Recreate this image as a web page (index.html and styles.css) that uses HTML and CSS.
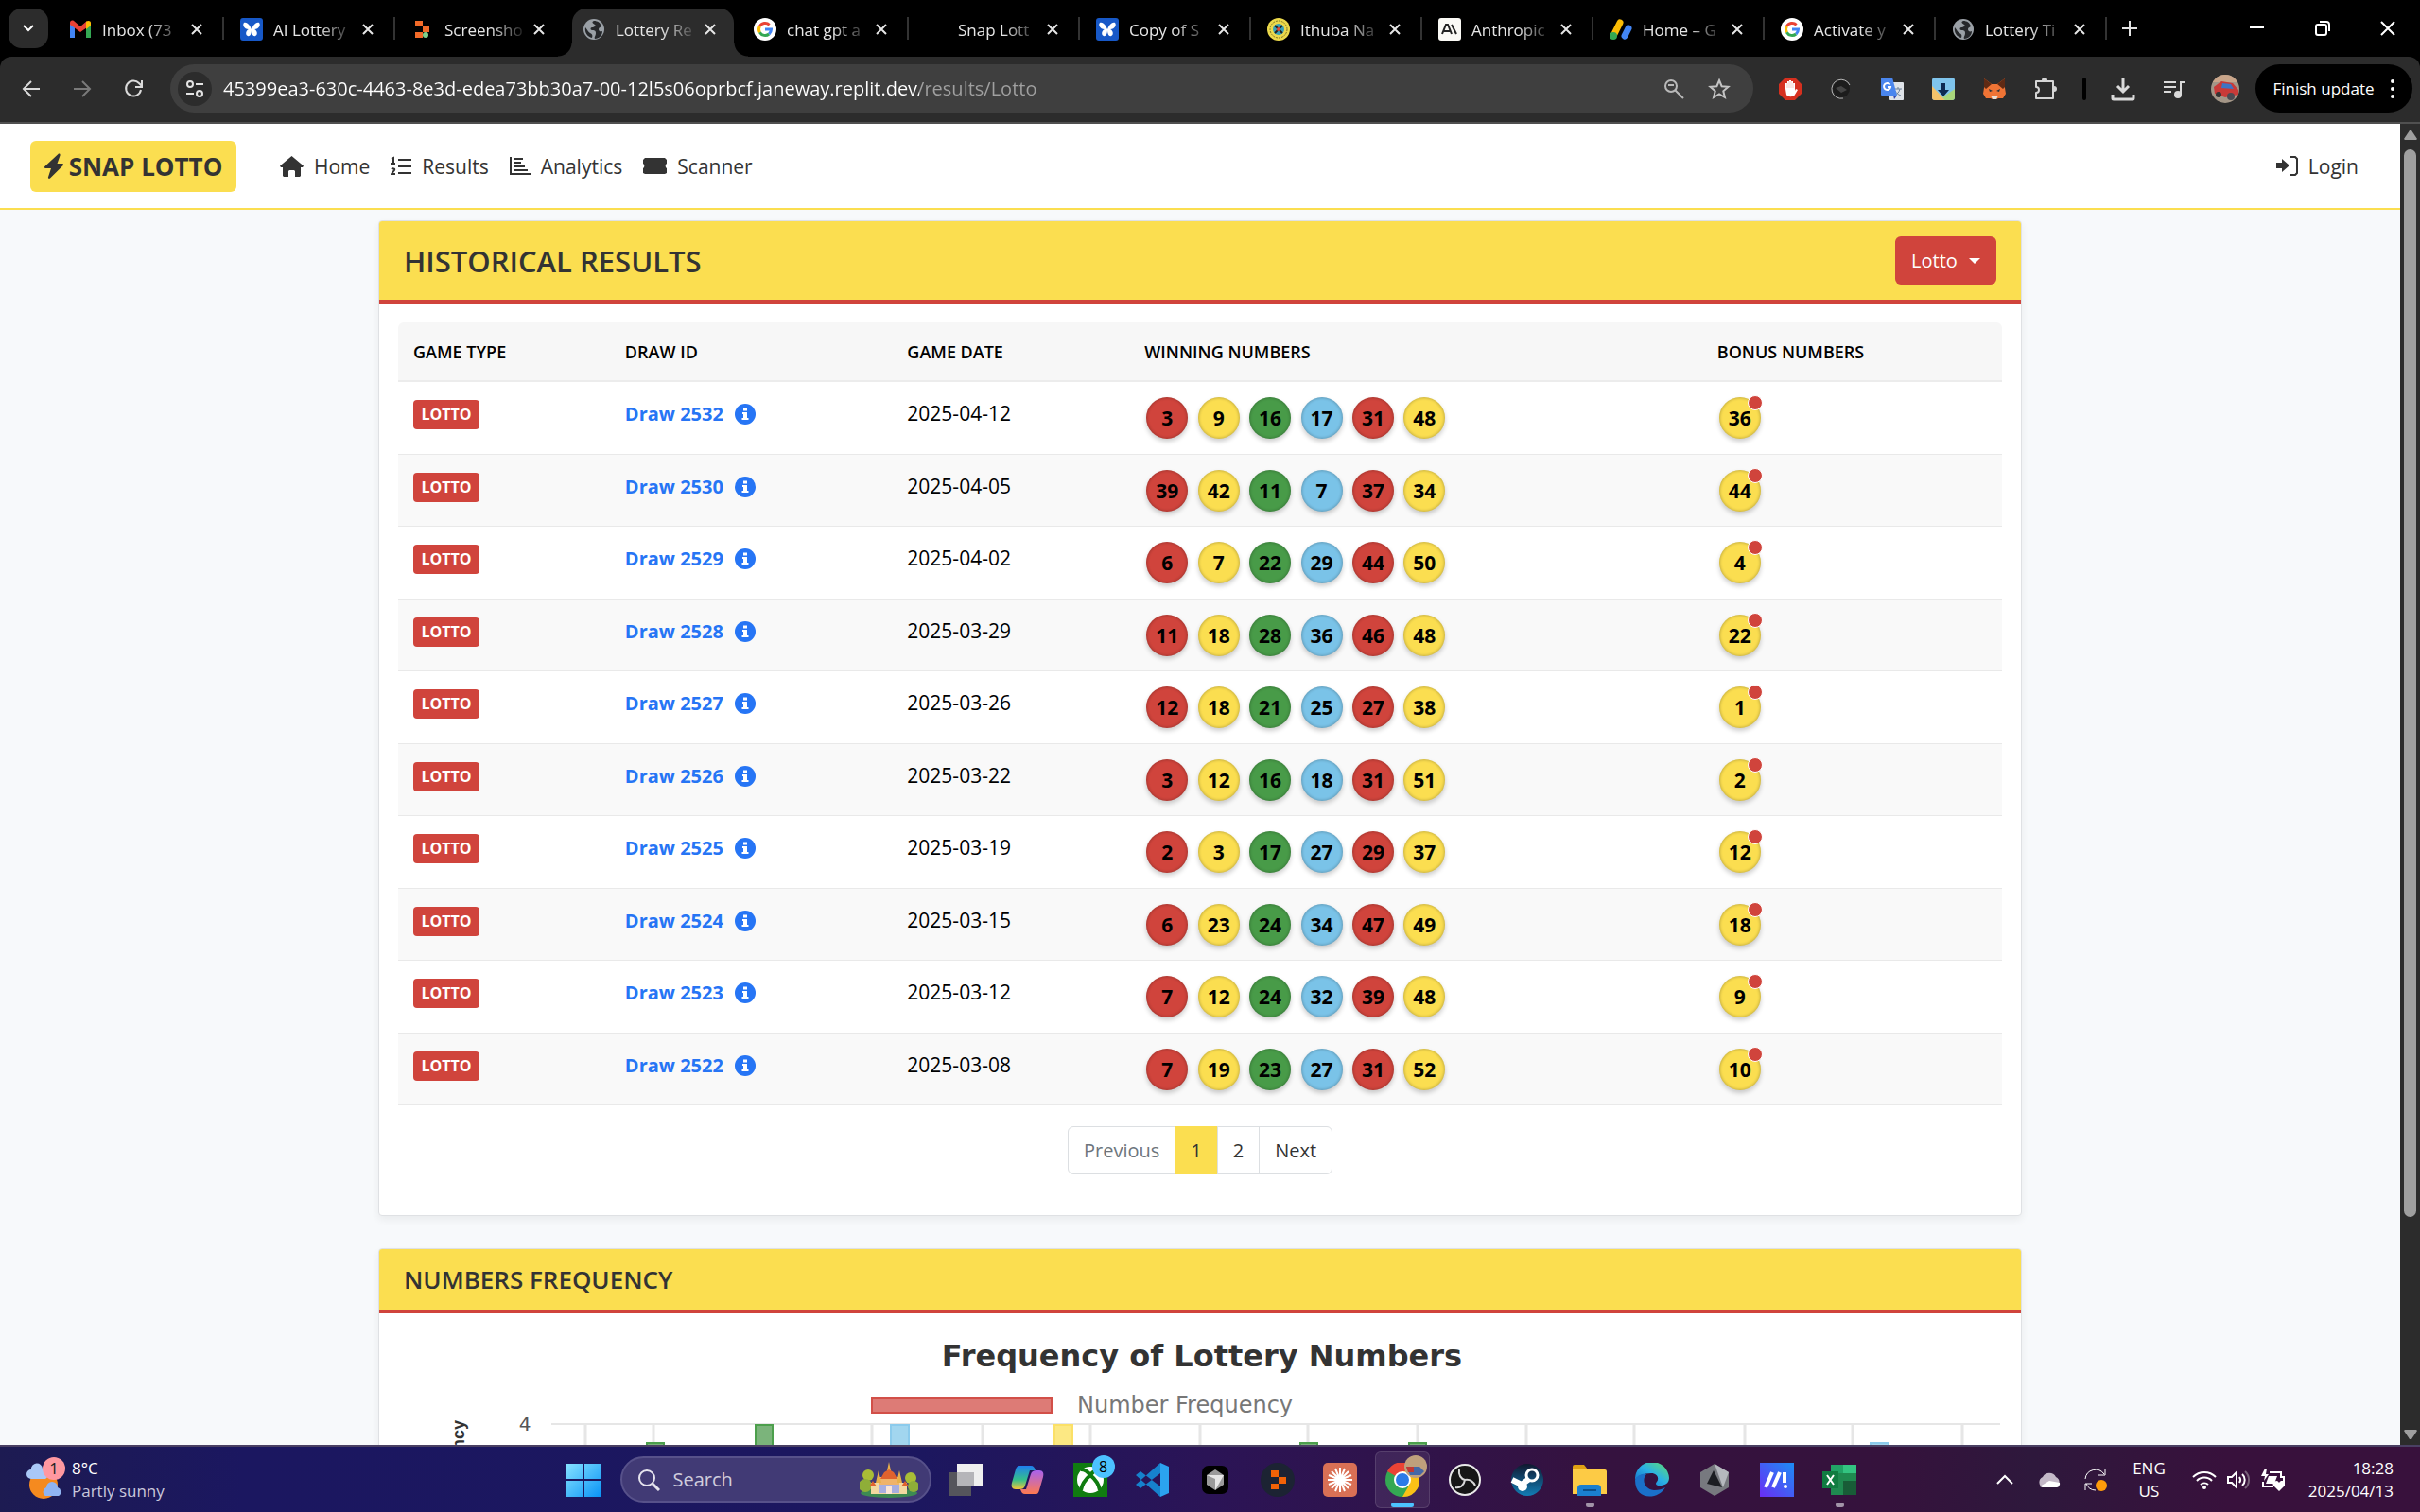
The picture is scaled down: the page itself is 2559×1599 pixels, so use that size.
FILE: index.html
```html
<!DOCTYPE html>
<html lang="en">
<head>
<meta charset="utf-8">
<title>Lottery Results</title>
<link rel="stylesheet" href="styles.css">
</head>
<body>
<svg class="defs" aria-hidden="true">
  <symbol id="close" viewBox="0 0 14 14"><path d="M2 2l10 10M12 2L2 12" stroke="currentColor" stroke-width="2" fill="none"/></symbol>
  <symbol id="globe" viewBox="0 0 24 24"><circle cx="12" cy="12" r="11" fill="#9aa0a6"/><path d="M12 3c-3 1-1 3 1 4s-1 3-3 3-2 3 0 3 4 0 4 3-2 4-1 6c5 0 8-4 8-8-2 1-4 0-4-2s2-2 3-3c-1-4-4-6-8-6zM3 10c-1 5 2 10 7 11 1-3 0-4-2-5s-3-4-5-6z" fill="#26282b"/></symbol>
  <symbol id="google" viewBox="0 0 24 24"><circle cx="12" cy="12" r="12" fill="#fff"/><g fill="none" stroke-width="3"><path d="M16.6 7.4A6.5 6.5 0 0 0 6.4 8.8" stroke="#ea4335"/><path d="M6.4 8.8a6.5 6.5 0 0 0 0 6.4" stroke="#fbbc05"/><path d="M6.4 15.2a6.5 6.5 0 0 0 9.8 1.8" stroke="#34a853"/><path d="M16.2 17c1.500-1.300 2.300-3 2.300-5H12" stroke="#4285f4"/></g></symbol>
  <symbol id="butterfly" viewBox="0 0 24 24"><rect width="24" height="24" rx="3" fill="#1758c7"/><path d="M12 12C10 7 7 4 4 5c-2 2 0 7 5 7-3 1-4 6-1 7 2 1 4-2 4-6 0 4 2 7 4 6 3-1 2-6-1-7 5 0 7-5 5-7-3-1-6 2-8 7z" fill="#fff"/></symbol>
  <symbol id="info" viewBox="0 0 22 22"><circle cx="11" cy="11" r="11" fill="#2675f5"/><path d="M9 4.500h4v3H9zM8 9h5v6h1.500v2H7.500v-2H9v-4H8z" fill="#fff"/></symbol>
  <symbol id="winlogo" viewBox="0 0 36 36"><defs><linearGradient id="wl" x1="0" y1="0" x2="1" y2="1"><stop offset="0" stop-color="#86e2ff"/><stop offset="1" stop-color="#0a94f7"/></linearGradient></defs><path d="M0 1h17v16H0zM19 1h17v16H19zM0 19h17v17H0zM19 19h17v17H19z" fill="url(#wl)"/></symbol>
</svg>

<header class="tabstrip">
  <button class="tab-search" aria-label="Search tabs"><svg width="16" height="16" viewBox="0 0 16 16"><path d="M3 5l5 5 5-5" stroke="#fff" stroke-width="2" fill="none"/></svg></button>
  <nav class="tabs" aria-label="Tabs">
    <div class="tab"><svg class="fav" viewBox="0 0 24 24"><path d="M1 21V5l5 4v12z" fill="#4285f4"/><path d="M18 9l5-4v16h-5z" fill="#34a853"/><path d="M1 5c0-2 2-3 4-2l7 6 7-6v7l-7 5-11-8z" fill="#ea4335"/><path d="M18 4c2-2 5-1 5 1v3l-5 4z" fill="#fbbc04"/></svg><span>Inbox (73</span><button aria-label="Close"><svg><use href="#close"/></svg></button></div>
    <div class="tab"><svg class="fav"><use href="#butterfly"/></svg><span>AI Lottery</span><button aria-label="Close"><svg><use href="#close"/></svg></button></div>
    <div class="tab no-line"><svg class="fav" viewBox="0 0 24 24"><path d="M4 3h8v6H4zM12 9h7v6h-7zM4 15h8v6H4z" fill="#f26a28"/><circle cx="15" cy="18" r="3" fill="#7fd08a"/></svg><span>Screensho</span><button aria-label="Close"><svg><use href="#close"/></svg></button></div>
    <div class="tab active"><svg class="fav"><use href="#globe"/></svg><span>Lottery Re</span><button aria-label="Close"><svg><use href="#close"/></svg></button></div>
    <div class="tab"><svg class="fav"><use href="#google"/></svg><span>chat gpt a</span><button aria-label="Close"><svg><use href="#close"/></svg></button></div>
    <div class="tab"><svg class="fav"></svg><span>Snap Lott</span><button aria-label="Close"><svg><use href="#close"/></svg></button></div>
    <div class="tab"><svg class="fav"><use href="#butterfly"/></svg><span>Copy of S</span><button aria-label="Close"><svg><use href="#close"/></svg></button></div>
    <div class="tab"><svg class="fav" viewBox="0 0 24 24"><circle cx="12" cy="12" r="12" fill="#ecd94b"/><circle cx="12" cy="12" r="9" fill="none" stroke="#7d7424" stroke-width="1" stroke-dasharray="2 1"/><circle cx="12" cy="12" r="6" fill="#38a0b8"/><path d="M8 8l8 8M16 8l-8 8" stroke="#222" stroke-width="2"/><circle cx="12" cy="12" r="2" fill="#e04a3a"/></svg><span>Ithuba Na</span><button aria-label="Close"><svg><use href="#close"/></svg></button></div>
    <div class="tab"><svg class="fav" viewBox="0 0 24 24"><rect width="24" height="24" rx="3" fill="#faf9f5"/><path d="M4 17L8 7h2l4 10M6 14h6M14 7l5 10" stroke="#222" stroke-width="2" fill="none"/></svg><span>Anthropic</span><button aria-label="Close"><svg><use href="#close"/></svg></button></div>
    <div class="tab"><svg class="fav" viewBox="0 0 24 24"><path d="M5 17L11 5" stroke="#fbbc04" stroke-width="7" stroke-linecap="round"/><path d="M16 19l4-8" stroke="#4285f4" stroke-width="7" stroke-linecap="round"/><circle cx="4" cy="19" r="4" fill="#34a853"/></svg><span>Home – G</span><button aria-label="Close"><svg><use href="#close"/></svg></button></div>
    <div class="tab"><svg class="fav"><use href="#google"/></svg><span>Activate y</span><button aria-label="Close"><svg><use href="#close"/></svg></button></div>
    <div class="tab"><svg class="fav"><use href="#globe"/></svg><span>Lottery Ti</span><button aria-label="Close"><svg><use href="#close"/></svg></button></div>
  </nav>
  <button class="new-tab" aria-label="New tab"><svg width="18" height="18" viewBox="0 0 18 18"><path d="M9 1v16M1 9h16" stroke="#e3e3e3" stroke-width="2"/></svg></button>
  <div class="win-controls">
    <button aria-label="Minimize"><svg viewBox="0 0 18 18"><path d="M1 8h15" stroke="#fff" stroke-width="2"/></svg></button>
    <button aria-label="Restore"><svg viewBox="0 0 18 18"><rect x="2" y="5" width="11" height="11" rx="2" fill="none" stroke="#fff" stroke-width="2"/><path d="M6 2h7a3 3 0 0 1 3 3v7" fill="none" stroke="#fff" stroke-width="2"/></svg></button>
    <button aria-label="Close window"><svg viewBox="0 0 18 18"><path d="M2 2l14 14M16 2L2 16" stroke="#fff" stroke-width="2"/></svg></button>
  </div>
</header>

<div class="toolbar">
  <button class="tool" aria-label="Back"><svg width="24" height="24" viewBox="0 0 24 24"><path d="M21 12H4M12 4l-8 8 8 8" stroke="#dadada" stroke-width="2" fill="none"/></svg></button>
  <button class="tool" aria-label="Forward"><svg width="24" height="24" viewBox="0 0 24 24"><path d="M3 12h17M12 4l8 8-8 8" stroke="#7a7a7a" stroke-width="2" fill="none"/></svg></button>
  <button class="tool" aria-label="Reload"><svg width="24" height="24" viewBox="0 0 24 24"><path d="M20 13a8 8 0 1 1-2-7l3 3M21 3v7h-7" stroke="#dadada" stroke-width="2" fill="none"/></svg></button>
  <div class="omnibox">
    <button class="site-info" aria-label="Site information"><svg width="20" height="20" viewBox="0 0 20 20"><g stroke="#e3e3e3" stroke-width="2" fill="none"><circle cx="5" cy="5" r="3"/><path d="M11 5h8"/><circle cx="15" cy="15" r="3"/><path d="M1 15h8"/></g></svg></button>
    <input class="url" type="text" aria-label="Address" value="45399ea3-630c-4463-8e3d-edea73bb30a7-00-12l5s06oprbcf.janeway.replit.dev/results/Lotto">
    <button aria-label="Zoom"><svg width="22" height="22" viewBox="0 0 22 22"><g stroke="#b9b9b9" stroke-width="2" fill="none"><circle cx="8" cy="8" r="6"/><path d="M5 7h6M12 12l9 9"/></g></svg></button>
    <button aria-label="Bookmark"><svg width="24" height="24" viewBox="0 0 24 24"><path d="M12 3l2.600 6.200 6.900.6-5.200 4.500 1.600 6.700L12 17.400 6.100 21l1.600-6.700-5.200-4.500 6.900-.6z" stroke="#c4c4c4" stroke-width="2" fill="none"/></svg></button>
  </div>
  <div class="extensions">
    <button class="tool" aria-label="Ad blocker"><svg width="24" height="24" viewBox="0 0 24 24"><path d="M7 0h10l7 7v10l-7 7H7l-7-7V7z" fill="#d6301f"/><path d="M7 12V6h2V4h2V3h2v1h2v2h2v8l1-2 2 1-3 5c-1 3-8 3-9 0z" fill="#fff"/><path d="M9 6v5M11 4v7M13 4v7M15 6v5" stroke="#e9988f" stroke-width=".5"/></svg></button>
    <button class="tool" aria-label="Dark extension"><svg width="24" height="24" viewBox="0 0 24 24"><circle cx="12" cy="12" r="9" fill="#1c1c1c"/><path d="M14 22A10 10 0 1 1 21 8" stroke="#b5b5b5" stroke-width="1" fill="none"/><path d="M6 11l6-2 6 4-6 3z" fill="#444"/></svg></button>
    <button class="tool" aria-label="Translate"><svg width="26" height="26" viewBox="0 0 26 26"><rect x="10" y="6" width="15" height="19" rx="1" fill="#dfe3e8"/><path d="M15 13h8M19 11v2M21 13c-1 4-3 5-5 7M16 15c1 2 3 4 6 5" stroke="#6a7f99" stroke-width="1" fill="none"/><path d="M14 20h4l-3 4z" fill="#3447a8"/><path d="M1 1h12l5 19H2a1 1 0 0 1-1-1z" fill="#4a86ee"/><path d="M10.500 8.500a3.500 3.500 0 1 0 .5 2.500H8" stroke="#fff" stroke-width="2" fill="none"/></svg></button>
    <button class="tool" aria-label="Downloader"><svg width="26" height="26" viewBox="0 0 26 26"><rect x="1" y="1" width="24" height="24" rx="3" fill="#7fc4ec"/><path d="M1 10l14 15H4a3 3 0 0 1-3-3z" fill="#f4c26a"/><path d="M25 13L12 22l3 3h7a3 3 0 0 0 3-3z" fill="#a9d77c"/><path d="M11 7h4v7h4l-6 7-6-7h4z" fill="#0d2a52"/></svg></button>
    <button class="tool" aria-label="Wallet"><svg width="26" height="26" viewBox="0 0 26 26"><path d="M2 2l8 6h6l8-6v10l1 6-3 5h-5l-2 1h-4l-2-1H4l-3-5 1-6z" fill="#ef7435"/><path d="M2 2l8 6-6 5-2-2zM24 2l-8 6 6 5 2-2z" fill="#5f2a14"/><path d="M7 13l4 2-3 1zM19 13l-4 2 3 1z" fill="#26323c"/><path d="M9 20h8l-2 4h-4z" fill="#e8dfd5"/></svg></button>
    <button class="tool" aria-label="Extensions"><svg width="26" height="26" viewBox="0 0 26 26"><path d="M3 5h18v18H3v-6a3 3 0 0 0 0-6z" stroke="#d6d6d6" stroke-width="2" fill="none" stroke-linejoin="round"/><path d="M9 4a3 3 0 0 1 6 0zM22 10a3 3 0 0 1 0 6z" fill="#d6d6d6"/></svg></button>
    <span class="divider"></span>
    <button class="tool" aria-label="Downloads"><svg width="26" height="26" viewBox="0 0 26 26"><path d="M13 1v15M7 10l6 6 6-6M2 19v4a1 1 0 0 0 1 1h20a1 1 0 0 0 1-1v-4" stroke="#dadada" stroke-width="3" fill="none"/></svg></button>
    <button class="tool" aria-label="Media"><svg width="24" height="24" viewBox="0 0 24 24"><path d="M1 5h13M1 10h13M1 15h8M19 18V5h5" stroke="#dadada" stroke-width="2" fill="none"/><circle cx="16" cy="18" r="4" fill="#dadada"/></svg></button>
    <button class="tool" aria-label="Profile"><svg width="30" height="30" viewBox="0 0 30 30"><clipPath id="av"><circle cx="15" cy="15" r="15"/></clipPath><g clip-path="url(#av)"><path d="M0 0h30v30H0z" fill="#a49687"/><path d="M0 0h30v8H0z" fill="#c9a58a"/><path d="M3 13l8-6 12 2 6 7v5l-14 3-11-4z" fill="#c93a38"/><path d="M12 9l9 1 3 5-13-1z" fill="#3f74c4"/><circle cx="8" cy="21" r="3" fill="#333"/><circle cx="21" cy="23" r="4" fill="#4c4a52"/></g></svg></button>
  </div>
  <button class="update">Finish update<svg width="6" height="22" viewBox="0 0 6 22"><g fill="#fff"><circle cx="3" cy="3" r="2"/><circle cx="3" cy="11" r="2"/><circle cx="3" cy="19" r="2"/></g></svg></button>
</div>

<div class="viewport">
  <div class="page">
    <nav class="navbar">
      <a class="brand" href="#"><svg width="20" height="28" viewBox="0 0 20 28"><path d="M14.500 1c1-1 2.500 0 2 1.500L13.500 11H19c1 0 1.400 1.300.7 2L6 26.500c-1 1-2.500.2-2-1.200L7 16H1c-1 0-1.400-1.300-.6-2z" fill="#333"/></svg>SNAP LOTTO</a>
      <a class="nav-link" href="#"><svg width="25" height="24" viewBox="0 0 25 24"><path d="M12.500 1L0 11.500l1 1.500h2v9l1 1h5v-6l1-1h5l1 1v6h5l1-1v-9h2l1-1.500z" fill="#333"/></svg>Home</a>
      <a class="nav-link" href="#"><svg width="22" height="24" viewBox="0 0 22 24"><path d="M8 5h14M8 12h14M8 19h14" stroke="#333" stroke-width="2"/><path d="M1 4l2-1v6M0 9h5M1 15c1-1 4-1 3 1l-3 4h4" stroke="#333" stroke-width="2" fill="none"/></svg>Results</a>
      <a class="nav-link" href="#"><svg width="22" height="24" viewBox="0 0 22 24"><path d="M1 2v18h21" stroke="#333" stroke-width="2" fill="none"/><path d="M5 4h9M5 8h7M5 12h11M5 16h14" stroke="#333" stroke-width="2"/></svg>Analytics</a>
      <a class="nav-link" href="#"><svg width="25" height="24" viewBox="0 0 25 24"><path d="M2 3h21l2 2v4a3 3 0 0 0 0 5v5l-2 1H2l-2-1v-5a3 3 0 0 0 0-5V5z" fill="#333"/></svg>Scanner</a>
      <a class="nav-link login" href="#"><svg width="23" height="24" viewBox="0 0 23 24"><path d="M0 8h6V4l8 7-8 7v-4H0z" fill="#333"/><path d="M15 2h5l2 2v15l-2 2h-5" stroke="#333" stroke-width="2" fill="none"/></svg>Login</a>
    </nav>

    <main class="container">
      <section class="card">
        <header class="card-head">
          <h1>HISTORICAL RESULTS</h1>
          <button class="dropdown">Lotto<span class="caret"></span></button>
        </header>
        <div class="card-body">
          <table class="results">
            <thead><tr><th class="c-type">GAME TYPE</th><th class="c-id">DRAW ID</th><th class="c-date">GAME DATE</th><th class="c-win">WINNING NUMBERS</th><th>BONUS NUMBERS</th></tr></thead>
            <tbody>
              <tr><td><span class="badge">LOTTO</span></td><td><a href="#">Draw 2532<svg><use href="#info"/></svg></a></td><td>2025-04-12</td><td><div class="balls"><b>3</b><b>9</b><b>16</b><b>17</b><b>31</b><b>48</b></div></td><td><b class="bonus">36</b></td></tr>
              <tr><td><span class="badge">LOTTO</span></td><td><a href="#">Draw 2530<svg><use href="#info"/></svg></a></td><td>2025-04-05</td><td><div class="balls"><b>39</b><b>42</b><b>11</b><b>7</b><b>37</b><b>34</b></div></td><td><b class="bonus">44</b></td></tr>
              <tr><td><span class="badge">LOTTO</span></td><td><a href="#">Draw 2529<svg><use href="#info"/></svg></a></td><td>2025-04-02</td><td><div class="balls"><b>6</b><b>7</b><b>22</b><b>29</b><b>44</b><b>50</b></div></td><td><b class="bonus">4</b></td></tr>
              <tr><td><span class="badge">LOTTO</span></td><td><a href="#">Draw 2528<svg><use href="#info"/></svg></a></td><td>2025-03-29</td><td><div class="balls"><b>11</b><b>18</b><b>28</b><b>36</b><b>46</b><b>48</b></div></td><td><b class="bonus">22</b></td></tr>
              <tr><td><span class="badge">LOTTO</span></td><td><a href="#">Draw 2527<svg><use href="#info"/></svg></a></td><td>2025-03-26</td><td><div class="balls"><b>12</b><b>18</b><b>21</b><b>25</b><b>27</b><b>38</b></div></td><td><b class="bonus">1</b></td></tr>
              <tr><td><span class="badge">LOTTO</span></td><td><a href="#">Draw 2526<svg><use href="#info"/></svg></a></td><td>2025-03-22</td><td><div class="balls"><b>3</b><b>12</b><b>16</b><b>18</b><b>31</b><b>51</b></div></td><td><b class="bonus">2</b></td></tr>
              <tr><td><span class="badge">LOTTO</span></td><td><a href="#">Draw 2525<svg><use href="#info"/></svg></a></td><td>2025-03-19</td><td><div class="balls"><b>2</b><b>3</b><b>17</b><b>27</b><b>29</b><b>37</b></div></td><td><b class="bonus">12</b></td></tr>
              <tr><td><span class="badge">LOTTO</span></td><td><a href="#">Draw 2524<svg><use href="#info"/></svg></a></td><td>2025-03-15</td><td><div class="balls"><b>6</b><b>23</b><b>24</b><b>34</b><b>47</b><b>49</b></div></td><td><b class="bonus">18</b></td></tr>
              <tr><td><span class="badge">LOTTO</span></td><td><a href="#">Draw 2523<svg><use href="#info"/></svg></a></td><td>2025-03-12</td><td><div class="balls"><b>7</b><b>12</b><b>24</b><b>32</b><b>39</b><b>48</b></div></td><td><b class="bonus">9</b></td></tr>
              <tr><td><span class="badge">LOTTO</span></td><td><a href="#">Draw 2522<svg><use href="#info"/></svg></a></td><td>2025-03-08</td><td><div class="balls"><b>7</b><b>19</b><b>23</b><b>27</b><b>31</b><b>52</b></div></td><td><b class="bonus">10</b></td></tr>
            </tbody>
          </table>
          <nav class="pagination" aria-label="Result pages"><a class="disabled" href="#">Previous</a><a class="current" href="#">1</a><a href="#">2</a><a href="#">Next</a></nav>
        </div>
      </section>

      <section class="card">
        <header class="card-head"><h2>NUMBERS FREQUENCY</h2></header>
        <div class="card-body">
          <svg class="chart" viewBox="0 0 1696 600" role="img" aria-label="Frequency of Lottery Numbers">
            <text class="chart-title" x="850" y="36" text-anchor="middle">Frequency of Lottery Numbers</text>
            <rect x="501" y="69" width="190" height="16" fill="#dd7b76" stroke="#d24f48" stroke-width="2"/>
            <text class="chart-legend" x="718" y="85">Number Frequency</text>
            <text class="chart-tick" x="134" y="104" text-anchor="middle">4</text>
            <text class="chart-axis" transform="translate(70 93) rotate(-90)" text-anchor="end">Frequency</text>
            <path d="M162 97H1694" stroke="#e6e6e6" stroke-width="2"/>
            <path d="M198 97v400M270 97v400M386 97v400M501 97v400M618 97v400M732 97v400M848 97v400M962 97v400M1078 97v400M1193 97v400M1307 97v400M1424 97v400M1538 97v400M1654 97v400" stroke="#e6e6e6" stroke-width="3"/>
            <g fill="#7bb47b" stroke="#4c9f4c" stroke-width="2"><path d="M263 117h18v380h-18zM954 117h18v380h-18zM1069 117h18v380h-18z"/><path d="M378 98h18v400h-18z"/></g>
            <path d="M521 98h19v400h-19zM1557 117h19v380h-19z" fill="#a2d6ef" stroke="#8ccbec" stroke-width="2"/>
            <path d="M694 98h19v400h-19z" fill="#fce883" stroke="#fbe067" stroke-width="2"/>
          </svg>
        </div>
      </section>
    </main>
  </div>
  <div class="scrollbar" aria-hidden="true">
    <svg width="14" height="12" viewBox="0 0 14 12"><path d="M6 1h2l6 9-1 1H1l-1-1z" fill="#9f9f9f"/></svg>
    <div class="track"><div class="thumb"></div></div>
    <svg width="14" height="12" viewBox="0 0 14 12"><path d="M6 11h2l6-9-1-1H1L0 2z" fill="#9f9f9f"/></svg>
  </div>
</div>

<footer class="taskbar">
  <div class="weather">
    <svg width="42" height="50" viewBox="0 0 42 50"><circle cx="18" cy="30" r="15" fill="#f58a1f"/><path d="M5 24a5 5 0 0 1 0-10 6 6 0 0 1 12-1 6 6 0 0 1 3 11z" fill="#a9c8f7"/><path d="M20 42a5 5 0 0 1 1-9 6 6 0 0 1 12 0 5 5 0 0 1 1 9z" fill="#8fb4f2"/><circle cx="29" cy="13" r="12" fill="#ff98a0"/><text x="29" y="19" text-anchor="middle" class="count">1</text></svg>
    <p><span>8°C</span><br>Partly sunny</p>
  </div>
  <div class="apps">
    <button class="app" aria-label="Start"><svg><use href="#winlogo"/></svg></button>
    <label class="search">
      <svg width="24" height="24" viewBox="0 0 24 24"><circle cx="10" cy="10" r="8" stroke="#e6e4ee" stroke-width="2" fill="none"/><path d="M16 16l7 7" stroke="#e6e4ee" stroke-width="3"/></svg>
      <input type="search" placeholder="Search" aria-label="Search">
      <svg width="62" height="38" viewBox="0 0 62 38"><ellipse cx="31" cy="33" rx="30" ry="5" fill="#3d8a52"/><circle cx="9" cy="14" r="6" fill="#a9bd36"/><circle cx="6" cy="25" r="7" fill="#8fae38"/><circle cx="54" cy="17" r="6" fill="#a9bd36"/><circle cx="57" cy="26" r="6" fill="#8fae38"/><path d="M12 22h38v12H12z" fill="#f3d8a0"/><path d="M20 16h22v16H20z" fill="#f0b36a"/><path d="M17 22l3-13 3 13zM28 14l3-14 3 14zM39 22l3-13 3 13z" fill="#e8b04a"/><path d="M22 18l4-7 5-3 5 3 4 7zM10 26l4-6 4 6zM44 26l4-6 4 6z" fill="#e0622e"/><path d="M20 24h22v9H20z" fill="#a8aee0"/><path d="M28 26h6v8h-6z" fill="#fbe6d8"/></svg>
    </label>
    <button class="app" aria-label="Task view"><svg viewBox="0 0 36 36"><path d="M0 10h24v25H0z" fill="#55555c"/><path d="M9 1h27v24H9z" fill="#efefef"/><path d="M9 10h18v15H9z" fill="#b5b5b9"/></svg></button>
    <button class="app" aria-label="Copilot"><svg viewBox="0 0 36 36"><defs><linearGradient id="c1" x1="0" y1="0" x2="0" y2="1"><stop offset="0" stop-color="#1f7ff0"/><stop offset=".6" stop-color="#35c08a"/><stop offset="1" stop-color="#f5c63a"/></linearGradient><linearGradient id="c2" x1="0" y1="0" x2="0" y2="1"><stop offset="0" stop-color="#a862ef"/><stop offset="1" stop-color="#ff7a50"/></linearGradient></defs><path d="M9 3h12c3 0 4 2 5 5h-6l-5 16c-1 3-3 4-6 4H5c-4 0-5-3-4-7L5 7c1-3 2-4 4-4z" fill="url(#c1)"/><path d="M27 33H15c-3 0-4-2-5-5h6l5-16c1-3 3-4 6-4h3c4 0 5 3 4 7l-4 14c-1 3-2 4-3 4z" fill="url(#c2)"/></svg></button>
    <button class="app" aria-label="Xbox"><svg viewBox="0 0 36 36"><path d="M0 0h36v36H0z" fill="#107c10"/><circle cx="18" cy="18" r="14" fill="#fff"/><path d="M8 7c4 0 7 2 10 6 3-4 6-6 10-6M18 13C12 18 9 23 8 29M18 13c6 5 9 10 10 16" stroke="#107c10" stroke-width="4" fill="none"/></svg><span class="app-count">8</span></button>
    <button class="app" aria-label="Code"><svg viewBox="0 0 36 36"><path d="M26 0l9 4v28l-9 4z" fill="#2ba3ef"/><path d="M26 0v11L5 27l-5-4zM26 36V25L5 9l-5 4z" fill="#1682cd"/></svg></button>
    <button class="app" aria-label="Cursor"><svg viewBox="0 0 36 36"><rect x="4" y="3" width="28" height="30" rx="7" fill="#000"/><path d="M18 7l9 6v10l-9 6-9-6V13z" fill="#9a9a9a"/><path d="M9 13h18L18 29V17z" fill="#e6e6e6"/></svg></button>
    <button class="app" aria-label="Replit"><svg viewBox="0 0 36 36"><circle cx="18" cy="18" r="18" fill="#1c2333"/><path d="M11 8h8v7h-8zM19 15h8v7h-8zM11 22h8v6h-8z" fill="#f26207"/></svg></button>
    <button class="app" aria-label="Claude"><svg viewBox="0 0 36 36"><rect width="36" height="36" rx="5" fill="#d97055"/><path d="M18 5v26M5 18h26M9 9l18 18M27 9L9 27M13 6l10 24M23 6L13 30M6 13l24 10M6 23l24-10" stroke="#fff" stroke-width="2"/></svg></button>
    <button class="app running" aria-label="Chrome"><svg viewBox="0 0 36 36"><circle cx="18" cy="18" r="18" fill="#34a853"/><path d="M18 18L2 9a18 18 0 0 1 32 0z" fill="#ea4335"/><path d="M18 18V9h16a18 18 0 0 1-16 27l8-14z" fill="#fbc116"/><circle cx="18" cy="18" r="9" fill="#fff"/><circle cx="18" cy="18" r="7" fill="#2c7be8"/></svg><svg class="profile" viewBox="0 0 24 24"><circle cx="12" cy="12" r="12" fill="#bfa07c"/><path d="M2 12h14l5 5-4 4H6z" fill="#4668a6"/><path d="M2 12h8v6H4z" fill="#c03a35"/></svg></button>
    <button class="app" aria-label="OBS"><svg viewBox="0 0 36 36"><circle cx="18" cy="18" r="16" fill="#161616" stroke="#e8e8e8" stroke-width="2"/><path d="M12 7c-1 6 2 10 6 11 6-1 9 2 11 6M18 18c-1 6-5 9-10 8" stroke="#d8d8d8" stroke-width="2" fill="none"/></svg></button>
    <button class="app" aria-label="Steam"><svg viewBox="0 0 36 36"><defs><linearGradient id="st" x1="0" y1="0" x2="0" y2="1"><stop offset="0" stop-color="#10182f"/><stop offset="1" stop-color="#127db5"/></linearGradient></defs><circle cx="18" cy="18" r="17" fill="url(#st)"/><path d="M2 18l10 5 8-6" stroke="#fff" stroke-width="6" fill="none"/><circle cx="23" cy="13" r="6" fill="none" stroke="#fff" stroke-width="3"/><circle cx="13" cy="25" r="5" fill="#fff"/></svg></button>
    <button class="app open" aria-label="File Explorer"><svg viewBox="0 0 36 36"><path d="M0 4a2 2 0 0 1 2-2h10l4 5H0z" fill="#e0a013"/><path d="M0 7h34a2 2 0 0 1 2 2v24H0z" fill="#fdcb45"/><path d="M5 35v-8a4 4 0 0 1 4-4h17a4 4 0 0 1 4 4v8z" fill="#1a7fd0"/><path d="M11 29h14" stroke="#0b4f8c" stroke-width="2"/></svg></button>
    <button class="app" aria-label="Edge"><svg viewBox="0 0 36 36"><defs><linearGradient id="ed" x1="0" y1="1" x2="1" y2="0"><stop offset="0" stop-color="#1268c4"/><stop offset=".5" stop-color="#2ab0e6"/><stop offset="1" stop-color="#62e06a"/></linearGradient></defs><path d="M0 18A18 18 0 0 1 36 16c0 6-5 8-10 8-4 0-5-2-3-4 3-4 0-9-6-9C9 11 2 14 0 18z" fill="url(#ed)"/><path d="M0 18c2-5 8-7 12-6-5 5-3 16 8 17 5 0 9-1 12-3-7 13-32 15-32-8z" fill="#1a70c9"/></svg></button>
    <button class="app" aria-label="Armoury"><svg viewBox="0 0 36 36"><path d="M18 1l15 9v16l-15 9-15-9V10z" fill="#77797f"/><path d="M18 1l15 9-6 16z" fill="#b5b8be"/><path d="M17 8l9 18-16-4z" fill="#1b1d22"/></svg></button>
    <button class="app" aria-label="MyASUS"><svg viewBox="0 0 36 36"><defs><linearGradient id="ma" x1="0" y1="1" x2="1" y2="0"><stop offset="0" stop-color="#6a2df5"/><stop offset="1" stop-color="#1c8df5"/></linearGradient></defs><path d="M0 0h36v36H0z" fill="url(#ma)"/><path d="M6 26l7-16M14 26l7-16M26 10v11" stroke="#fff" stroke-width="4"/><circle cx="27" cy="25" r="2" fill="#fff"/></svg></button>
    <button class="app open" aria-label="Excel"><svg viewBox="0 0 36 36"><path d="M9 2h27v32H9z" fill="#1f8a50"/><path d="M22 2h14v9H22z" fill="#33c481"/><path d="M9 2h13v9H9z" fill="#21a366"/><path d="M22 19h14v15H22z" fill="#185c37"/><path d="M0 9h17v18H0z" fill="#107c41"/><path d="M5 13l7 10M12 13L5 23" stroke="#fff" stroke-width="2"/></svg></button>
  </div>
  <div class="tray">
    <svg width="18" height="12" viewBox="0 0 18 12"><path d="M1 10l8-8 8 8" stroke="#fff" stroke-width="2" fill="none"/></svg>
    <svg class="cloud" width="26" height="18" viewBox="0 0 26 18"><path d="M6 17a6 6 0 0 1 0-11 8 8 0 0 1 14 0 6 6 0 0 1 0 11z" fill="#c4b9c8"/><path d="M3 16l10-6 11 2a4 4 0 0 1-3 5H6z" fill="#fff"/></svg>
    <svg class="sync" width="26" height="26" viewBox="0 0 26 26"><path d="M2 12a11 11 0 0 1 20-5M23 1v7h-7M13 24A11 11 0 0 1 3 17M2 24v-7h7" stroke="#fff" stroke-width="1" fill="none"/><circle cx="19" cy="19" r="6" fill="#ff9c0a"/></svg>
    <p class="lang">ENG<br>US</p>
    <div class="status">
      <svg width="26" height="20" viewBox="0 0 26 20"><path d="M1 7a17 17 0 0 1 24 0M5 11a11 11 0 0 1 16 0M9 15a6 6 0 0 1 8 0" stroke="#fff" stroke-width="2" fill="none"/><circle cx="13" cy="18" r="2" fill="#fff"/></svg>
      <svg width="26" height="20" viewBox="0 0 26 20"><path d="M2 7h4l5-5v16l-5-5H2z" stroke="#fff" stroke-width="2" fill="none"/><path d="M14 7a5 5 0 0 1 0 6M17 4a8 8 0 0 1 0 12" stroke="#fff" stroke-width="2" fill="none"/><path d="M20 1a12 12 0 0 1 0 18" stroke="#776078" stroke-width="2" fill="none"/></svg>
      <svg width="26" height="24" viewBox="0 0 26 24"><path d="M5 0L1 8h4l-1 5 5-7H6l1-6z" fill="#fff"/><path d="M10 4h12v5h3v5h-3M3 14v5h11" stroke="#fff" stroke-width="2" fill="none"/><path d="M9 8h9l-3 8H6z" fill="#fff"/><path d="M20 24l-6-6a3 3 0 0 1 6-3 3 3 0 0 1 6 3z" fill="#fff"/></svg>
    </div>
    <p class="clock">18:28<br>2025/04/13</p>
  </div>
</footer>
</body>
</html>
```
FILE: styles.css
```css
* { box-sizing: border-box; }

body {
  margin: 0;
  height: 100vh;
  display: flex;
  flex-direction: column;
  overflow: hidden;
  font-family: "Open Sans", "Noto Sans", sans-serif;
  font-size: 20px;
  color: #333;
  background: #000;
}

button, input { font: inherit; color: inherit; border: 0; padding: 0; background: none; outline: 0; }
button { display: flex; align-items: center; justify-content: center; }
a { color: inherit; text-decoration: none; }
p, h1, h2 { margin: 0; font-weight: 400; }
svg { display: block; flex: none; }
.defs { position: absolute; width: 0; height: 0; }

/* Tab strip */
.tabstrip { display: flex; align-items: center; height: 60px; padding-left: 9px; color: #e6e6e6; }
.tab-search { width: 42px; height: 42px; border-radius: 14px; background: #2c2c2c; margin-right: 5px; }
.tabs { display: grid; grid-template-columns: repeat(12, minmax(0, 1fr)); flex: 0 1 2172px; min-width: 0; height: 60px; padding-top: 9px; }
.tab { position: relative; display: flex; align-items: center; gap: 11px; height: 51px; padding: 0 22px 7px 17px; font-size: 17px; }
.tab::after { content: ""; position: absolute; right: 0; top: 9px; width: 2px; height: 24px; background: #333; }
.tab.no-line::after { display: none; }
.tab.active { margin: 0 4px 0 6px; padding: 0 18px 7px 11px; border-radius: 15px 15px 0 0; background: #2c2c2c; }
.tab.active::before, .tab.active::after { content: ""; position: absolute; top: auto; bottom: 0; width: 15px; height: 15px; }
.tab.active::before { left: -15px; background: radial-gradient(circle at 0 0, transparent 14px, #2c2c2c 15px); }
.tab.active::after { right: -15px; background: radial-gradient(circle at 100% 0, transparent 14px, #2c2c2c 15px); }
.fav { width: 24px; height: 24px; }
.tab span { flex: 1 1 0; min-width: 0; margin-right: -6px; white-space: nowrap; -webkit-mask-image: linear-gradient(to right, #000 55%, transparent); mask-image: linear-gradient(to right, #000 55%, transparent); }
.tab button { width: 14px; height: 14px; }
.tab button svg { width: 14px; height: 14px; }
.new-tab { width: 48px; height: 48px; }
.win-controls { display: flex; margin-left: auto; height: 60px; }
.win-controls button { width: 69px; }
.win-controls svg { width: 18px; height: 18px; }

/* Toolbar */
.toolbar { display: flex; align-items: center; height: 71px; padding: 0 8px 2px 6px; background: #2c2c2c; border-bottom: 2px solid #505050; border-radius: 12px 12px 0 0; color: #fff; }
.tool { width: 54px; height: 51px; }
.omnibox { display: flex; align-items: center; flex: 1; height: 51px; margin: 0 12px; padding: 0 12px 0 8px; border-radius: 26px; background: #3f3f3f; }
.omnibox button { width: 48px; height: 48px; }
.omnibox .site-info { width: 36px; height: 36px; border-radius: 50%; background: #2c2c2c; }
.url { flex: 1; margin-left: 12px; height: 48px; color: transparent; -webkit-text-fill-color: transparent; background: linear-gradient(to right, #fff 736px, #a0a0a0 736px); -webkit-background-clip: text; background-clip: text; }
.extensions { display: flex; align-items: center; }
.divider { width: 4px; height: 24px; margin: 0 12px; border-radius: 2px; background: #000; }
.update { width: 166px; height: 51px; gap: 16px; margin-left: 5px; border-radius: 26px; background: #000; font-size: 17px; white-space: nowrap; }

/* Page */
.viewport { display: flex; flex: 1; min-height: 0; background: #f7f9fb; }
.page { flex: 1; min-width: 0; overflow: hidden; }
.navbar { display: flex; align-items: center; gap: 22px; height: 91px; padding: 0 44px 0 32px; background: #fff; border-bottom: 2px solid #fbde50; }
.brand { display: flex; align-items: center; justify-content: center; gap: 6px; width: 218px; height: 54px; margin-right: 24px; border-radius: 6px; background: #fbde50; font-size: 26px; font-weight: 700; white-space: nowrap; }
.nav-link { display: flex; align-items: center; gap: 11px; font-size: 21px; }
.login { margin-left: auto; }

.container { max-width: 1738px; margin: 11px auto 0; }
.card { margin-bottom: 34px; border: 1px solid #dfe1e4; border-radius: 4px; background: #fff; box-shadow: 0 4px 8px rgba(0, 0, 0, .06); }
.card-head { display: flex; align-items: center; justify-content: space-between; padding: 16px 26px; background: #fbde50; border-bottom: 4px solid #d0443c; border-radius: 3px 3px 0 0; }
.card-head h1 { font-size: 31px; font-weight: 600; line-height: 36px; }
.card-head h2 { font-size: 26px; font-weight: 600; line-height: 32px; }
.card-body { padding: 20px 20px 43px; }
.dropdown { gap: 12px; width: 107px; height: 51px; border-radius: 6px; background: #d0443c; color: #fff; }
.caret { border: 6px solid transparent; border-top-color: #fff; border-bottom: 0; }

.results { width: 100%; table-layout: fixed; border-collapse: separate; border-spacing: 0; color: #000; }
.results th { height: 63px; padding: 0 16px; text-align: left; font-size: 18px; font-weight: 600; background: #f7f7f7; border-bottom: 2px solid #ececec; }
.results th:first-child { border-top-left-radius: 6px; }
.results th:last-child { border-top-right-radius: 6px; }
.c-type { width: 13.2%; }
.c-id { width: 17.6%; }
.c-date { width: 14.8%; }
.c-win { width: 35.7%; }
.results td { height: 76px; padding: 16px 16px 0; vertical-align: top; line-height: 35px; font-size: 21px; border-bottom: 1px solid #e9e9e9; }
.results tr:nth-child(odd) td { height: 77px; }
.results tr:nth-child(even) td { background: #f9f9f9; }
.results a { display: flex; align-items: center; gap: 12px; color: #2675f5; font-size: 20px; font-weight: 700; }
.results a svg { width: 22px; height: 22px; }
.badge { display: block; width: 70px; height: 31px; margin-top: 3px; border-radius: 4px; background: #d0443c; color: #fff; font-size: 16px; font-weight: 700; line-height: 31px; text-align: center; }
.balls { display: flex; justify-content: space-between; width: 320px; padding: 0 2px; }
.balls b, .bonus { display: block; width: 44px; height: 44px; border-radius: 50%; font-size: 21px; font-weight: 700; line-height: 45px; text-align: center; background: #fbde50; box-shadow: inset 0 0 3px 1px rgba(0, 0, 0, .2), 0 3px 5px rgba(0, 0, 0, .2); }
.balls b:nth-child(4n + 1) { background: #d0443c; }
.balls b:nth-child(3) { background: #489b48; }
.balls b:nth-child(4) { background: #7ac3e8; }
.bonus { position: relative; margin-left: 2px; }
.bonus::after { content: ""; position: absolute; top: -2px; right: -2px; width: 14px; height: 14px; border: 1px solid #fff; border-radius: 50%; background: #d0443c; }

.pagination { display: flex; width: max-content; margin: 22px auto 0; border: 1px solid #dcdfe2; border-radius: 6px; line-height: 49px; }
.pagination a { padding: 0 16px; border-left: 1px solid #dcdfe2; }
.pagination a:first-child { border-left: 0; }
.pagination .disabled { color: #6d757d; }
.pagination .current { margin: -1px 0; line-height: 51px; background: #fbde50; border-color: #fbde50; }

.chart { width: 100%; font-family: "DejaVu Sans", sans-serif; fill: #333; }
.chart-title { font-size: 32px; font-weight: 700; }
.chart-legend { font-size: 24px; fill: #777; }
.chart-tick { font-size: 20px; fill: #555; }
.chart-axis { font-size: 18px; font-family: "Liberation Sans", sans-serif; font-weight: 700; }

.scrollbar { display: flex; flex-direction: column; align-items: center; width: 21px; padding: 6px 0 5px; background: #2c2c2c; }
.track { flex: 1; width: 13px; padding: 9px 0; }
.thumb { height: 84%; border-radius: 7px; background: #9f9f9f; }

/* Taskbar */
.taskbar { display: grid; grid-template-columns: 1fr auto 1fr; align-items: center; height: 71px; border-top: 2px solid #4a4063; color: #fff; font-size: 17px; line-height: 24px; background: linear-gradient(to right, #1d1b52, #1b1760 10%, #1c175f 38%, #2b1456 50%, #35123f 66%, #35123c 78%, #2e183c 84%, #38113c 92%, #38113c); }
.weather { display: flex; align-items: center; gap: 6px; padding-left: 28px; color: #c9c8dc; }
.weather span { color: #fff; }
.count { font-size: 17px; fill: #222; }
.apps { display: flex; align-items: center; padding-left: 2px; }
.app { position: relative; width: 66px; height: 68px; }
.app svg { width: 36px; height: 36px; }
.app-count { position: absolute; right: 7px; top: 8px; width: 24px; height: 24px; border-radius: 50%; background: #4cc2ff; color: #000; font-size: 16px; line-height: 24px; }
.running::before { content: ""; position: absolute; inset: 4px; border-radius: 6px; border: 1px solid rgba(255, 255, 255, .12); background: rgba(255, 255, 255, .08); }
.running svg { position: relative; }
.running .profile { position: absolute; right: 7px; top: 8px; width: 24px; height: 24px; }
.running::after { content: ""; position: absolute; bottom: 5px; left: 21px; width: 24px; height: 5px; border-radius: 3px; background: #4cc2ff; }
.open::after { content: ""; position: absolute; bottom: 5px; left: 29px; width: 9px; height: 5px; border-radius: 3px; background: #a294a8; }
.search { display: flex; align-items: center; gap: 14px; width: 329px; height: 49px; margin: 0 3px 0 6px; padding: 0 12px 0 16px; border: 2px solid #57518a; border-radius: 25px; background: #413a75; font-size: 20px; }
.search input { flex: 1; min-width: 0; }
.search input::placeholder { color: #d0cddd; opacity: 1; }
.tray { display: flex; align-items: center; justify-content: flex-end; padding-right: 28px; }
.cloud { margin-left: 25px; }
.sync { margin-left: 23px; }
.lang { margin-left: 26px; text-align: center; }
.status { display: flex; gap: 10px; align-items: center; margin: 0 25px 0 28px; }
.clock { text-align: right; }
```
